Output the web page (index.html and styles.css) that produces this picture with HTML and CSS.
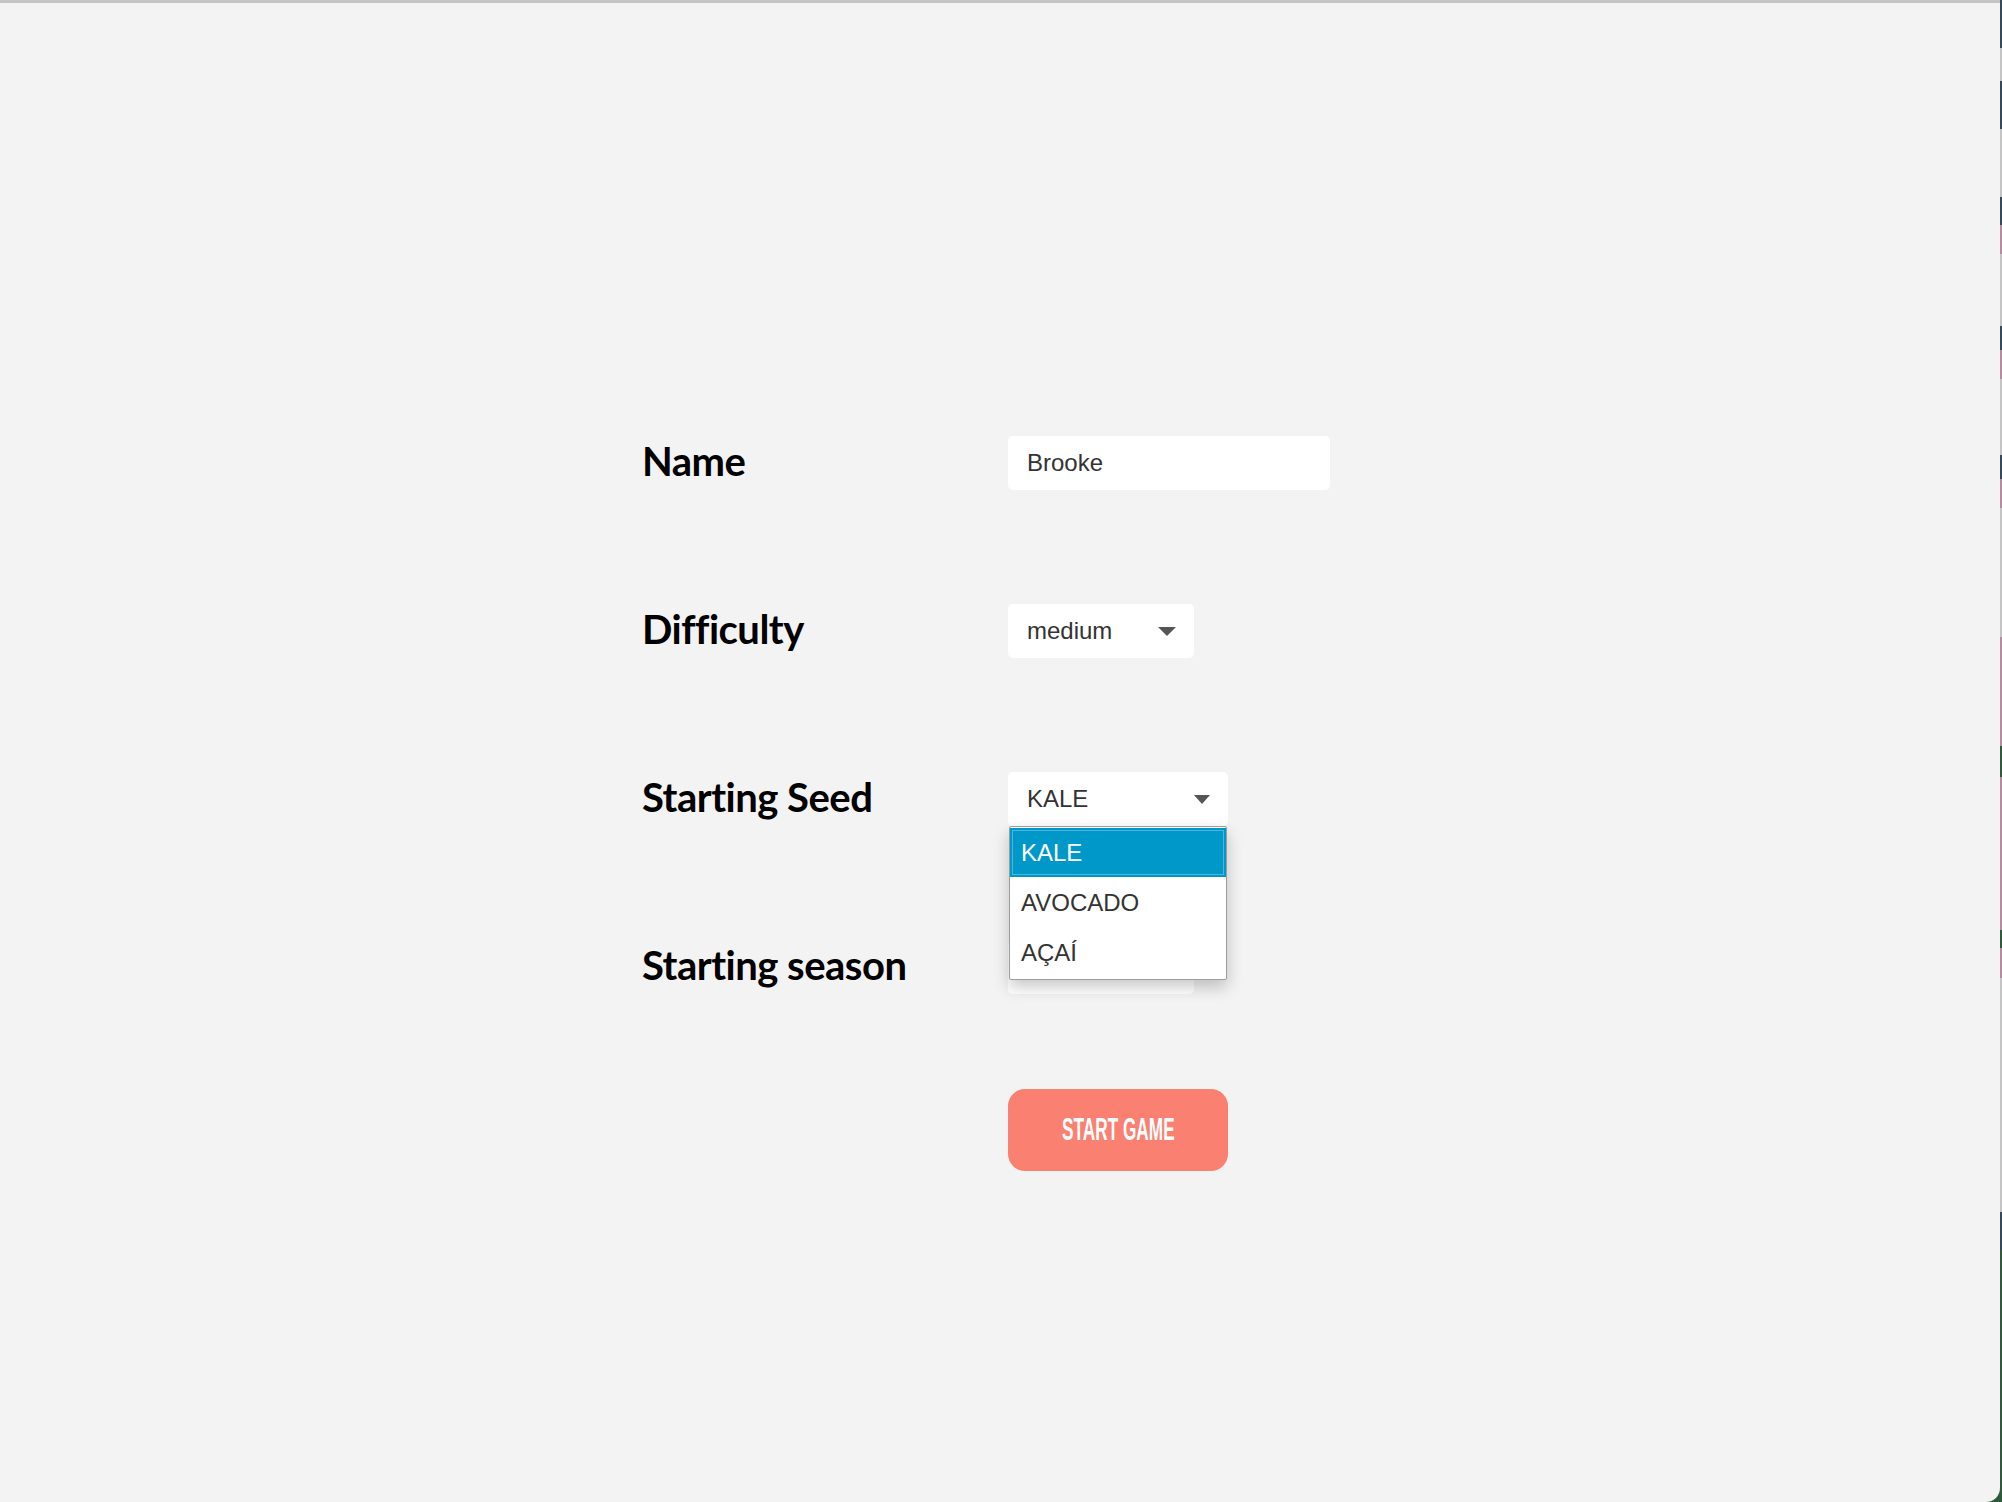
FILE: index.html
```html
<!DOCTYPE html>
<html lang="en">
<head>
<meta charset="utf-8">
<title>New Game</title>
<link rel="stylesheet" href="styles.css">
</head>
<body>
<div class="window">
  <form class="form">
    <div class="row">
      <label class="label">Name</label>
      <div class="input">Brooke</div>
    </div>
    <div class="row">
      <label class="label">Difficulty</label>
      <div class="select select-short">
        <span>medium</span>
        <svg class="arrow" width="18" height="9" viewBox="0 0 18 9"><path d="M0 0H18L9 9Z" fill="#555"/></svg>
      </div>
    </div>
    <div class="row">
      <label class="label">Starting Seed</label>
      <div class="select-wrap">
        <div class="select select-long">
          <span>KALE</span>
          <svg class="arrow" width="16" height="9" viewBox="0 0 16 9"><path d="M0 0H16L8 9Z" fill="#555"/></svg>
        </div>
        <ul class="dropdown">
          <li class="option selected">KALE</li>
          <li class="option">AVOCADO</li>
          <li class="option">AÇAÍ</li>
        </ul>
      </div>
    </div>
    <div class="row">
      <label class="label">Starting season</label>
      <div class="select select-short">
        <span></span>
        <svg class="arrow" width="18" height="9" viewBox="0 0 18 9"><path d="M0 0H18L9 9Z" fill="#555"/></svg>
      </div>
    </div>
    <div class="row row-button">
      <span class="label"></span>
      <button type="button" class="start"><span class="start-text">START GAME</span></button>
    </div>
  </form>
</div>
<div class="strip"></div>
</body>
</html>
```
FILE: styles.css
```css
html, body {
  margin: 0;
  padding: 0;
  height: 100%;
}
body {
  display: flex;
  background: #2f5a3c;
  overflow: hidden;
}
.window {
  flex: 0 0 2000px;
  height: 100vh;
  box-sizing: border-box;
  background: #f3f3f3;
  border-top: 3px solid #c4c4c4;
  border-bottom-right-radius: 14px;
}
.strip {
  flex: 1;
  height: 100vh;
  background: linear-gradient(to bottom,
    #34495e 0%, #34495e 3.2%,
    #c4c4c4 3.2%, #c4c4c4 5.4%,
    #34495e 5.4%, #34495e 8.6%,
    #c4c4c4 8.6%, #c4c4c4 13.1%,
    #34495e 13.1%, #34495e 15%,
    #b88aa0 15%, #b88aa0 16.9%,
    #c4c4c4 16.9%, #c4c4c4 21.7%,
    #34495e 21.7%, #34495e 23.3%,
    #b88aa0 23.3%, #b88aa0 25.2%,
    #c4c4c4 25.2%, #c4c4c4 30.3%,
    #34495e 30.3%, #34495e 31.9%,
    #b88aa0 31.9%, #b88aa0 33.8%,
    #c4c4c4 33.8%, #c4c4c4 42.4%,
    #b88aa0 42.4%, #b88aa0 49.7%,
    #2f5a3c 49.7%, #2f5a3c 51.7%,
    #b88aa0 51.7%, #b88aa0 61.9%,
    #2f5a3c 61.9%, #2f5a3c 63.1%,
    #b88aa0 63.1%, #b88aa0 65.1%,
    #c4c4c4 65.1%, #c4c4c4 80.7%,
    #34495e 80.7%, #34495e 83.2%,
    #2f5a3c 83.2%, #2f5a3c 100%);
}
.form {
  width: 716px;
  margin: 0 auto;
  padding-top: 433px;
  display: flex;
  flex-direction: column;
  gap: 114px;
}
.row {
  display: flex;
  align-items: center;
  height: 54px;
}
.row-button {
  height: 82px;
  margin-top: -19px;
}
.label {
  flex: 0 0 366px;
  font-family: Lato, "Open Sans", sans-serif;
  font-weight: 700;
  font-size: 40px;
  line-height: 48px;
  padding-bottom: 4px;
  color: #000;
  letter-spacing: -0.5px;
}
.input,
.select {
  box-sizing: border-box;
  height: 54px;
  background: #fff;
  border-radius: 5px;
  font-family: "Liberation Sans", Arial, sans-serif;
  font-size: 24px;
  color: #333;
  padding: 0 18px 0 19px;
  display: flex;
  align-items: center;
}
.input {
  width: 322px;
}
.select {
  justify-content: space-between;
}
.select-short {
  width: 186px;
}
.select-long {
  width: 220px;
}
.arrow {
  display: block;
}
.select-wrap {
  position: relative;
}
.dropdown {
  position: absolute;
  top: 54px;
  left: 1px;
  width: 218px;
  box-sizing: border-box;
  margin: 0;
  padding: 1px 0;
  list-style: none;
  background: #fff;
  border: 1px solid #9d9d9d;
  border-radius: 2px;
  box-shadow: 0 7px 16px rgba(0, 0, 0, 0.22);
  z-index: 2;
}
.option {
  height: 50px;
  display: flex;
  align-items: center;
  padding-left: 11px;
  font-family: "Liberation Sans", Arial, sans-serif;
  font-size: 24px;
  color: #333;
}
.option.selected {
  background: #0098c9;
  color: #fff;
  box-shadow: inset 0 0 0 2px #0098c9, inset 0 0 0 3px #4db6df;
  height: 49px;
  margin-bottom: 1px;
}
.start {
  width: 220px;
  height: 82px;
  border: none;
  border-radius: 17px;
  background: #fa8072;
  color: #fff;
  padding: 0;
  display: flex;
  align-items: center;
  justify-content: center;
  cursor: pointer;
}
.start-text {
  display: inline-block;
  font-family: "Liberation Sans", Arial, sans-serif;
  font-weight: 700;
  font-size: 31px;
  transform: scaleX(0.556);
  white-space: nowrap;
}
```
